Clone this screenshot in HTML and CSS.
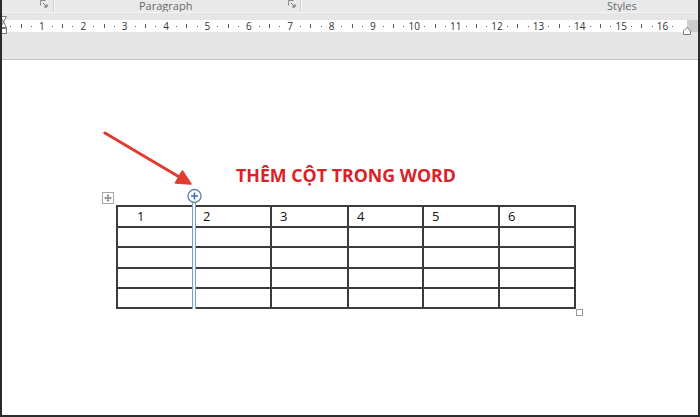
FILE: index.html
```html
<!DOCTYPE html>
<html>
<head>
<meta charset="utf-8">
<link rel="stylesheet" href="styles.css">
</head>
<body>
<div class="page">
  <div class="ribbon">
    <div class="grp g1">
      <svg class="launch" viewBox="0 0 8 8"><path d="M0.5 0.5H5.5M0.5 0.5V5.5" stroke="#8a8a8a" fill="none"/><path d="M3 3L7 7M7 4V7H4" stroke="#6a6a6a" fill="none"/></svg>
    </div>
    <div class="grp g2">
      <span class="label">Paragraph</span>
      <svg class="launch" viewBox="0 0 8 8"><path d="M0.5 0.5H5.5M0.5 0.5V5.5" stroke="#8a8a8a" fill="none"/><path d="M3 3L7 7M7 4V7H4" stroke="#6a6a6a" fill="none"/></svg>
    </div>
    <div class="grp g3">
      <span class="label">Styles</span>
    </div>
  </div>
  <div class="rulerbar">
    <div class="ruler">
      <div class="marks">
        <span></span><i class="d"></i><i class="t"></i><i class="d"></i><b>1</b>
        <i class="d"></i><i class="t"></i><i class="d"></i><b>2</b>
        <i class="d"></i><i class="t"></i><i class="d"></i><b>3</b>
        <i class="d"></i><i class="t"></i><i class="d"></i><b>4</b>
        <i class="d"></i><i class="t"></i><i class="d"></i><b>5</b>
        <i class="d"></i><i class="t"></i><i class="d"></i><b>6</b>
        <i class="d"></i><i class="t"></i><i class="d"></i><b>7</b>
        <i class="d"></i><i class="t"></i><i class="d"></i><b>8</b>
        <i class="d"></i><i class="t"></i><i class="d"></i><b>9</b>
        <i class="d"></i><i class="t"></i><i class="d"></i><b>10</b>
        <i class="d"></i><i class="t"></i><i class="d"></i><b>11</b>
        <i class="d"></i><i class="t"></i><i class="d"></i><b>12</b>
        <i class="d"></i><i class="t"></i><i class="d"></i><b>13</b>
        <i class="d"></i><i class="t"></i><i class="d"></i><b>14</b>
        <i class="d"></i><i class="t"></i><i class="d"></i><b>15</b>
        <i class="d"></i><i class="t"></i><i class="d"></i><b>16</b>
        <i class="d"></i>
      </div>
    </div>
    <div class="ruler-end"></div>
  </div>
  <div class="doc">
    <div class="title">THÊM CỘT TRONG WORD</div>
    <div class="tbl">
      <div class="c first">1</div><div class="c">2</div><div class="c">3</div><div class="c">4</div><div class="c">5</div><div class="c">6</div>
      <div class="c"></div><div class="c"></div><div class="c"></div><div class="c"></div><div class="c"></div><div class="c"></div>
      <div class="c"></div><div class="c"></div><div class="c"></div><div class="c"></div><div class="c"></div><div class="c"></div>
      <div class="c"></div><div class="c"></div><div class="c"></div><div class="c"></div><div class="c"></div><div class="c"></div>
      <div class="c"></div><div class="c"></div><div class="c"></div><div class="c"></div><div class="c"></div><div class="c"></div>
    </div>
  </div>
  <svg class="overlay" width="700" height="417" viewBox="0 0 700 417">
    <!-- left indent markers -->
    <path d="M0.5 16.5H6.5L3.5 22L6.5 27.5H0.5L3.5 22Z" fill="#fff" stroke="#7a7a7a"/>
    <rect x="0.5" y="28.5" width="6" height="5" fill="#fff" stroke="#7a7a7a"/>
    <!-- right indent marker -->
    <path d="M683.5 34.5V31L687 27.5L690.5 31V34.5Z" fill="#fff" stroke="#7a7a7a"/>
    <!-- arrow -->
    <line x1="105" y1="133" x2="181" y2="178" stroke="#e23b30" stroke-width="3" stroke-linecap="round"/>
    <path d="M191 184L175.4 182.9L182.4 170.9Z" fill="#e23b30" stroke="#e23b30" stroke-width="1.5" stroke-linejoin="round"/>
    <!-- insert column marker -->
    <rect x="192" y="202" width="4" height="107" fill="#f4f7fb"/>
    <line x1="192.5" y1="202" x2="192.5" y2="309" stroke="#7f9fc4" stroke-width="1"/>
    <line x1="195.5" y1="202" x2="195.5" y2="309" stroke="#7f9fc4" stroke-width="1"/>
    <circle cx="194.5" cy="196" r="6.5" fill="#fff" stroke="#5d87b6" stroke-width="1.4"/>
    <path d="M194.5 192.5V199.5M191 196H198" stroke="#3f6fa6" stroke-width="1.6"/>
    <!-- move handle -->
    <rect x="102.5" y="192.5" width="11" height="11" fill="#fff" stroke="#a8a8a8"/>
    <path d="M108 195V201M105 198H111" stroke="#6b6b6b" stroke-width="1"/>
    <path d="M108 194.3L106.6 195.8H109.4Z M108 201.7L106.6 200.2H109.4Z M104.3 198L105.8 196.6V199.4Z M111.7 198L110.2 196.6V199.4Z" fill="#6b6b6b"/>
    <!-- resize handle -->
    <rect x="576.5" y="309.5" width="6" height="6" fill="#fff" stroke="#9a9a9a"/>
  </svg>
</div>
</body>
</html>
```
FILE: styles.css
```css
* { box-sizing: border-box; }
html, body { margin: 0; padding: 0; background: #fff; }
.page {
  position: relative;
  width: 700px;
  height: 417px;
  border: 2px solid #2b2b2b;
  border-top: 0;
  display: flex;
  flex-direction: column;
  overflow: hidden;
  font-family: "Open Sans", "Liberation Sans", sans-serif;
}
.ribbon {
  height: 12px;
  background: #e9e9e9;
  display: flex;
  flex: none;
}
.grp {
  display: flex;
  align-items: flex-start;
  height: 12px;
  border-right: 1px solid #d2d2d2;
  box-shadow: 1px 0 0 #f8f8f8;
}
.g1 { width: 52px; justify-content: flex-end; padding-right: 5px; }
.g2 { width: 247px; padding-left: 85px; padding-right: 4px; }
.g3 { flex: 1; border-right: 0; box-shadow: none; padding-left: 306px; }
.label {
  font-size: 11px;
  line-height: 11px;
  color: #6a6a6a;
  margin-top: 0;
  white-space: nowrap;
}
.launch { width: 8px; height: 8px; display: block; }
.g2 .launch { margin-left: auto; }
.rulerbar {
  flex: none;
  height: 48px;
  background: #e6e6e6;
  border-top: 1px solid #f3f3f3;
  border-bottom: 1px solid #c4c4c4;
  padding-top: 7px;
  display: flex;
  align-items: flex-start;
}
.ruler {
  margin-left: 3px;
  width: 682px;
  height: 12px;
  background: #fff;
  display: flex;
}
.ruler-end {
  width: 11px;
  height: 12px;
  background: #cdcdcd;
}
.marks {
  margin-left: -9.6px;
  height: 12px;
  display: grid;
  grid-template-columns: repeat(66, 10.35px);
  align-items: center;
  justify-items: center;
}
.marks .d { display: block; width: 1px; height: 1px; background: #5a5a5a; }
.marks .t { display: block; width: 1px; height: 4px; background: #5a5a5a; }
.marks b {
  font-weight: 400;
  font-size: 10px;
  line-height: 12px;
  color: #333;
  white-space: nowrap;
}
.doc {
  flex: 1;
  background: #fff;
  padding-top: 104px;
  display: flex;
  flex-direction: column;
  align-items: flex-start;
}
.title {
  margin-left: 234px;
  height: 22px;
  line-height: 22px;
  font-size: 17.8px;
  font-weight: 700;
  color: #dc2128;
  white-space: nowrap;
}
.tbl {
  margin-top: 19px;
  margin-left: 114px;
  display: grid;
  grid-template-columns: 75px 75px 75px 73px 74px 74px;
  grid-template-rows: 19px 18px 19px 18px 18px;
  gap: 2px;
  padding: 2px;
  background: #3c3c3c;
}
.c {
  background: #fff;
  font-size: 13px;
  line-height: 19px;
  color: #111;
  padding-left: 8px;
}
.c.first { padding-left: 19px; }
.overlay {
  position: absolute;
  left: -2px;
  top: 0;
  pointer-events: none;
}
```
